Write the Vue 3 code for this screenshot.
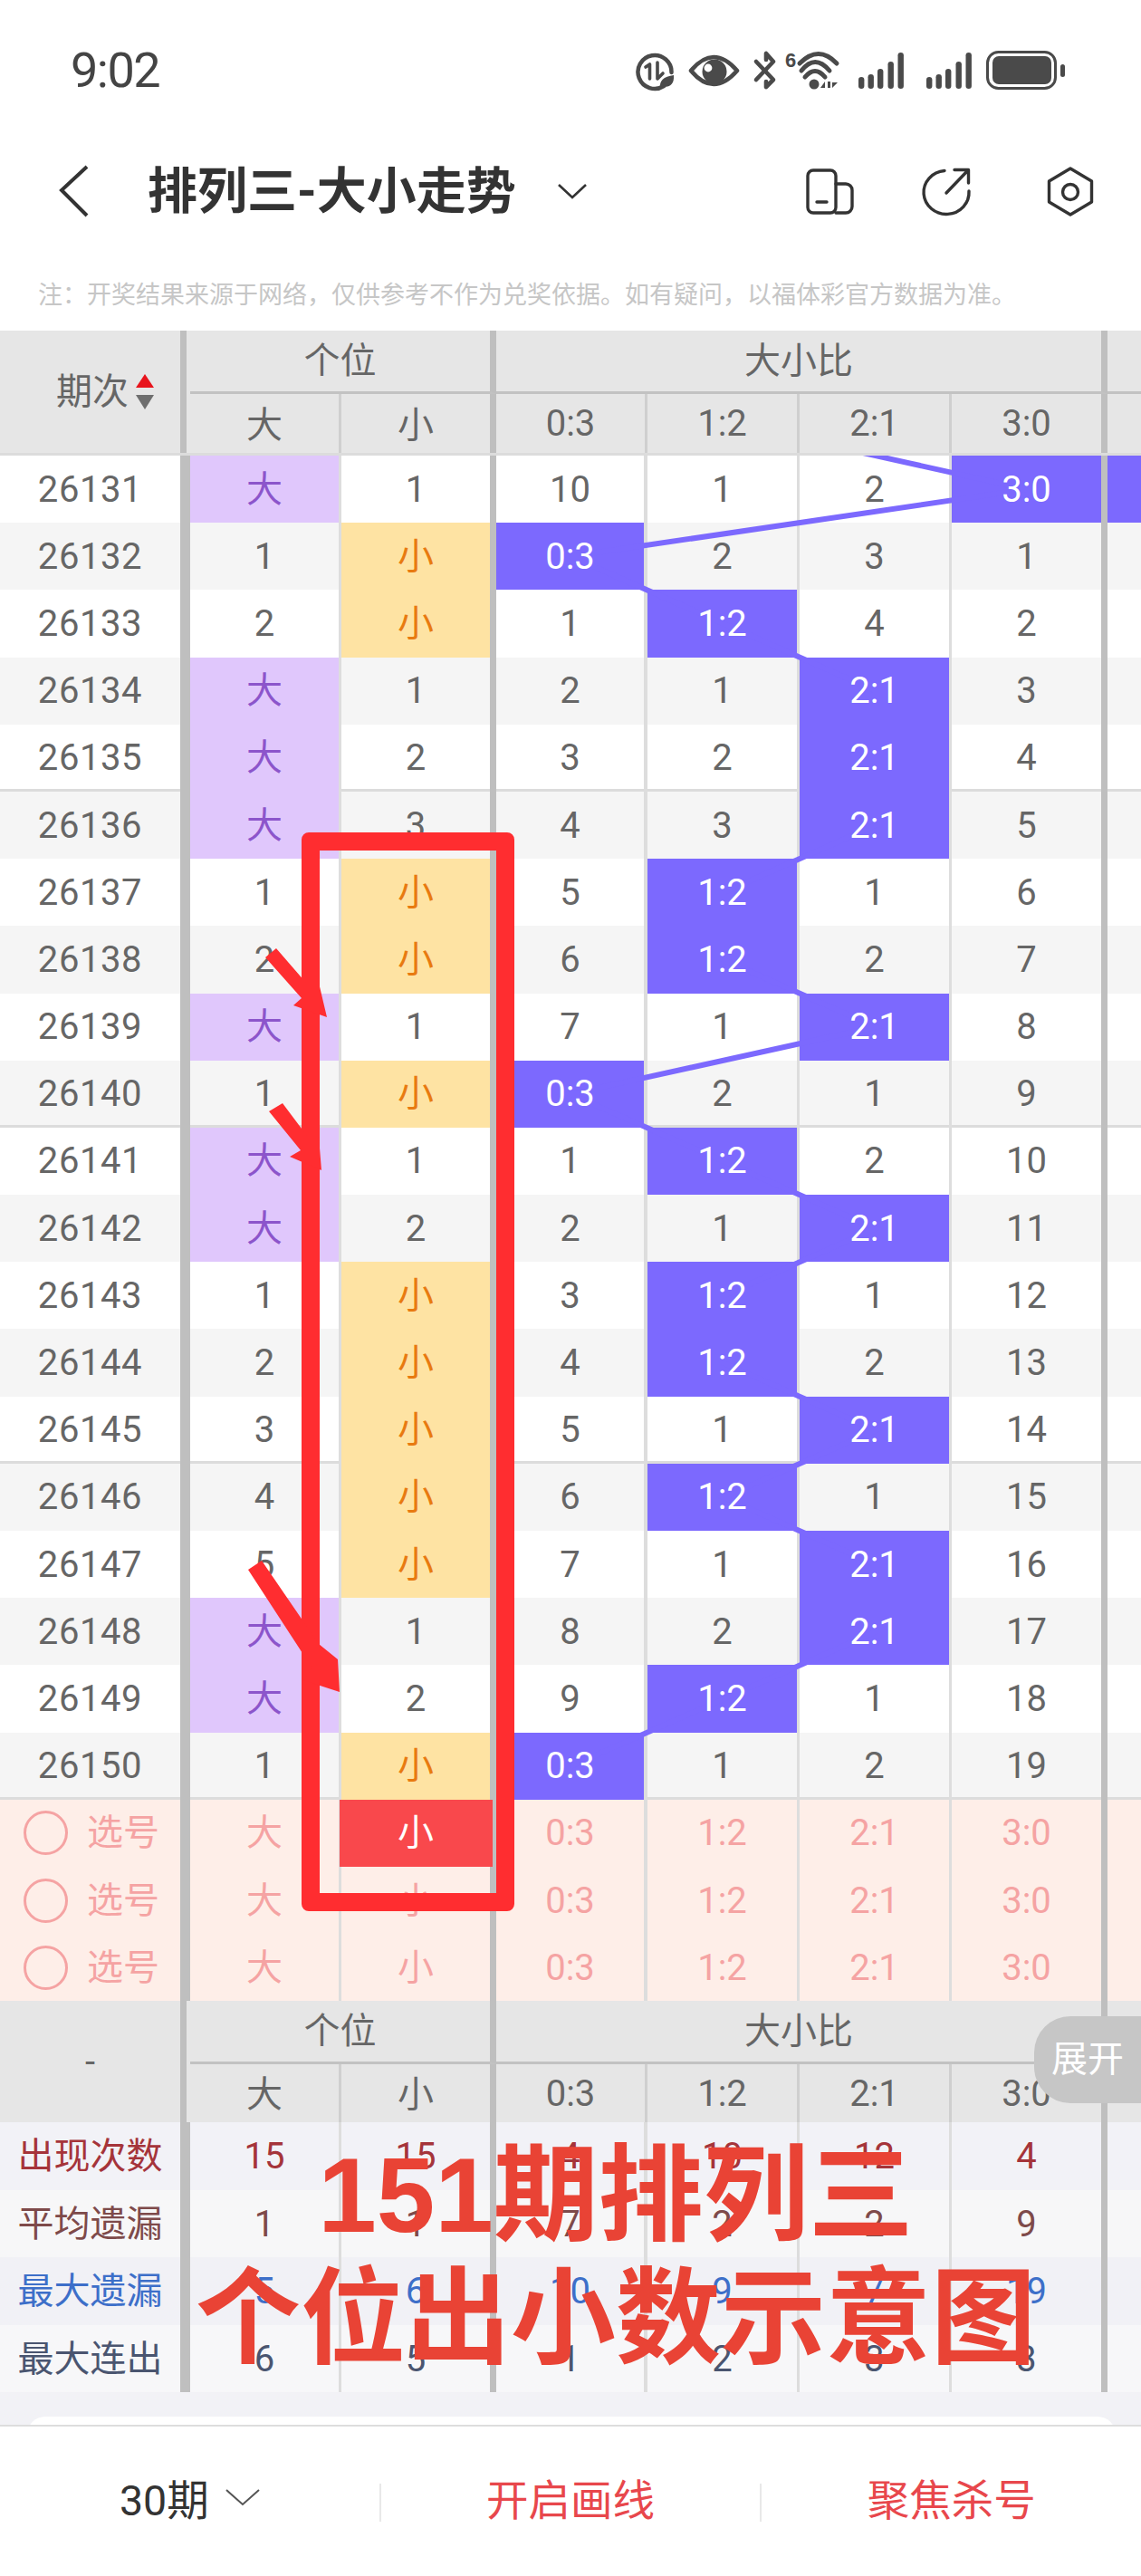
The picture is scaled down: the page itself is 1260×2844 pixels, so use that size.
<template>
  <div class="page">
    <div class="status">
      <span class="time">9:02</span>
      <svg class="status-icons" viewBox="700 54 480 48" width="480" height="48">
        <g fill="none" stroke="#4a4a4a" stroke-linecap="round" stroke-linejoin="round">
          <path d="M733 95 A18.5 18.5 0 1 1 741.5 80" stroke-width="4.5" />
          <path d="M713 74 L717.5 71 V87" stroke-width="3.6" />
          <path d="M726 69 V87 L732 81" stroke-width="3.6" />
          <path d="M763 78 Q788 48 814 78 Q788 108 763 78 Z" stroke-width="4.6" />
          <path d="M835 68 L854 88 L846 96 V90" stroke-width="4.6" />
          <path d="M854 68 L846 59 V66 M854 68 L835 88" stroke-width="4.6" />
          <path d="M883 70 Q904 49 924 70" stroke-width="5" />
          <path d="M885 78 Q900 59 916 78" stroke-width="5" />
          <path d="M889 85 Q900 72 911 85" stroke-width="5" />
          <rect x="1090.5" y="57.5" width="75" height="40" rx="12" stroke-width="3" />
        </g>
        <g fill="#4a4a4a">
          <path d="M729 98 Q727 85 744 83 Q745 96 733 96 Z" />
          <circle cx="789" cy="79" r="13.5" />
          <text x="867" y="74" class="six">6</text>
          <circle cx="899" cy="93" r="5.5" />
          <path d="M906 97 L911 90 V97 Z M914 90 H917 V97 H914 Z M919 91 L925 91 L919 97 Z" />
          <rect v-for="bar in signalBars" :key="bar.x" :x="bar.x" :y="bar.y" width="6.4" :height="98 - bar.y" rx="3.2" />
          <rect x="1096" y="62" width="65" height="31" rx="7" />
          <rect x="1171" y="71" width="5" height="14" rx="2.5" />
        </g>
        <circle cx="782" cy="75" r="4.4" fill="#fff" />
      </svg>
    </div>

    <div class="nav">
      <svg class="back" viewBox="0 0 40 60" width="40" height="60">
        <path d="M34 3 L6 29 L34 57" fill="none" stroke="#333" stroke-width="4" />
      </svg>
      <h1 class="title">排列三-大小走势</h1>
      <svg class="title-arrow" viewBox="0 0 32 18" width="32" height="18">
        <path d="M1 2 L16 16 L31 2" fill="none" stroke="#333" stroke-width="2.6" />
      </svg>
      <svg class="tools" viewBox="885 180 330 65" width="330" height="65">
        <g fill="none" stroke="#333" stroke-width="3.4" stroke-linecap="round" stroke-linejoin="round">
          <rect x="892" y="189" width="31" height="47" rx="6" />
          <path d="M923 204 H934 A7 7 0 0 1 941 211 V229 A7 7 0 0 1 934 236 H923" />
          <path d="M902 224 H913" />
          <path d="M1043 189.5 A25 24 0 1 0 1070 212" />
          <path d="M1045 214 L1069 189 M1054 188.5 H1069.5 V203" />
          <path d="M1182 187 L1205.5 201 V224 L1182 238 L1158.5 224 V201 Z" />
          <circle cx="1182" cy="213" r="8.5" />
        </g>
      </svg>
    </div>

    <p class="note">注：开奖结果来源于网络，仅供参考不作为兑奖依据。如有疑问，以福体彩官方数据为准。</p>

    <div class="head head-main">
      <div class="corner">
        <span class="cjk">期次</span>
        <span class="sort"><i class="up"></i><i class="down"></i></span>
      </div>
      <div class="group g1">个位</div>
      <div class="group g2">大小比</div>
      <div class="group g3"></div>
      <div v-for="label in subHeads" :key="label" class="sub">{{ label }}</div>
      <div class="sub-end"></div>
    </div>

    <div class="body">
      <div v-for="(row, i) in rows" :key="row.id" class="row" :class="{ stripe: i % 2 === 1, split: i > 0 && i % 5 === 0 }">
        <div class="cell c1"><span class="t num">{{ row.id }}</span></div>
        <div class="cell c2" :class="{ big: row.big === '大' }"><span class="t">{{ row.big }}</span></div>
        <div class="cell c3" :class="{ small: row.small === '小' }"><span class="t">{{ row.small }}</span></div>
        <div
          v-for="(val, j) in row.ratios"
          :key="j"
          class="cell"
          :class="['c' + (j + 4), { hit: typeof val === 'string' }]"
        >
          <span class="t">{{ val }}</span>
        </div>
        <div class="cell c8" :class="{ hit: i === 0 }"></div>
      </div>

      <div v-for="n in 3" :key="n" class="row pick" :class="{ split: n === 1 }">
        <div class="cell c1 pick-first">
          <i class="circle"></i>
          <span class="t cjk">选号</span>
        </div>
        <div class="cell c2"><span class="t cjk">大</span></div>
        <div class="cell c3" :class="{ picked: n === 1 }"><span class="t cjk">小</span></div>
        <div v-for="(label, j) in ratioLabels" :key="label" class="cell" :class="'c' + (j + 4)"><span class="t">{{ label }}</span></div>
        <div class="cell c8"></div>
      </div>

      <svg class="trend" viewBox="0 0 1260 1484" width="1260" height="1484">
        <polyline :points="trendPoints" fill="none" stroke="#7c69fe" stroke-width="6" />
      </svg>
    </div>

    <div class="head head-stats">
      <div class="corner corner-stats">-</div>
      <div class="group g1">个位</div>
      <div class="group g2">大小比</div>
      <div class="group g3"></div>
      <div v-for="label in subHeads" :key="label" class="sub">{{ label }}</div>
      <div class="sub-end"></div>
    </div>

    <div v-for="stat in stats" :key="stat.label" class="row stat" :class="stat.cls">
      <div class="cell c1"><span class="t cjk">{{ stat.label }}</span></div>
      <div v-for="(val, j) in stat.values" :key="j" class="cell" :class="'c' + (j + 2)"><span class="t">{{ val }}</span></div>
      <div class="cell c8"></div>
    </div>

    <div class="gap">
      <div class="gap-card"></div>
    </div>

    <div class="footer">
      <div class="foot-item period">
        30期
        <svg viewBox="0 0 38 20" width="38" height="20">
          <path d="M1 2 L19 18 L37 2" fill="none" stroke="#555" stroke-width="2" />
        </svg>
      </div>
      <div class="foot-item action">开启画线</div>
      <div class="foot-item action">聚焦杀号</div>
    </div>

    <div class="expand">展开</div>

    <div class="mark-box"></div>
    <svg class="marks" viewBox="0 0 1260 2844" width="1260" height="2844">
      <polygon points="293,1057 305,1047 344,1092 352,1085 361,1123 324,1110 333,1102" />
      <polygon points="297,1227 312,1218 345,1262 352,1255 355,1292 320,1277 332,1270" />
      <polygon points="274,1733 289,1723 352,1815 373,1832 375,1868 335,1855 345,1842" />
    </svg>

    <div class="caption">151期排列三<br />个位出小数示意图</div>
  </div>
</template>

<script setup>
import { computed } from 'vue'

const ratioLabels = ['0:3', '1:2', '2:1', '3:0']
const subHeads = ['大', '小', ...ratioLabels]

const rows = [
  { id: 26131, big: '大', small: 1, ratios: [10, 1, 2, '3:0'] },
  { id: 26132, big: 1, small: '小', ratios: ['0:3', 2, 3, 1] },
  { id: 26133, big: 2, small: '小', ratios: [1, '1:2', 4, 2] },
  { id: 26134, big: '大', small: 1, ratios: [2, 1, '2:1', 3] },
  { id: 26135, big: '大', small: 2, ratios: [3, 2, '2:1', 4] },
  { id: 26136, big: '大', small: 3, ratios: [4, 3, '2:1', 5] },
  { id: 26137, big: 1, small: '小', ratios: [5, '1:2', 1, 6] },
  { id: 26138, big: 2, small: '小', ratios: [6, '1:2', 2, 7] },
  { id: 26139, big: '大', small: 1, ratios: [7, 1, '2:1', 8] },
  { id: 26140, big: 1, small: '小', ratios: ['0:3', 2, 1, 9] },
  { id: 26141, big: '大', small: 1, ratios: [1, '1:2', 2, 10] },
  { id: 26142, big: '大', small: 2, ratios: [2, 1, '2:1', 11] },
  { id: 26143, big: 1, small: '小', ratios: [3, '1:2', 1, 12] },
  { id: 26144, big: 2, small: '小', ratios: [4, '1:2', 2, 13] },
  { id: 26145, big: 3, small: '小', ratios: [5, 1, '2:1', 14] },
  { id: 26146, big: 4, small: '小', ratios: [6, '1:2', 1, 15] },
  { id: 26147, big: 5, small: '小', ratios: [7, 1, '2:1', 16] },
  { id: 26148, big: '大', small: 1, ratios: [8, 2, '2:1', 17] },
  { id: 26149, big: '大', small: 2, ratios: [9, '1:2', 1, 18] },
  { id: 26150, big: 1, small: '小', ratios: ['0:3', 1, 2, 19] },
]

const stats = [
  { label: '出现次数', cls: 's1', values: [15, 15, 4, 10, 12, 4] },
  { label: '平均遗漏', cls: 's2', values: [1, 1, 7, 2, 2, 9] },
  { label: '最大遗漏', cls: 's3', values: [5, 6, 10, 9, 7, 19] },
  { label: '最大连出', cls: 's4', values: [6, 5, 1, 2, 3, 3] },
]

const signalBars = [
  [948, 85], [958.5, 82], [969, 76], [980.5, 68], [991.5, 58],
  [1023, 85], [1033.5, 82], [1044, 76], [1055.5, 68], [1066.5, 58],
].map(([x, y]) => ({ x, y }))

const ROW_H = 74.2
const columnCenters = [630, 799, 967, 1134]

const trendPoints = computed(() => {
  const points = [`${columnCenters[1]},${-ROW_H / 2}`]
  rows.forEach((row, i) => {
    const col = row.ratios.findIndex((v) => typeof v === 'string')
    points.push(`${columnCenters[col]},${(i + 0.5) * ROW_H}`)
  })
  return points.join(' ')
})
</script>

<style>
body {
  background: #fff;
}
</style>

<style scoped>
.page {
  position: relative;
  width: 1260px;
  height: 2844px;
  overflow: hidden;
  background: #fff;
  font-family: Roboto, "Noto Sans CJK SC", sans-serif;
  color: #666;
}

.status {
  display: flex;
  align-items: center;
  justify-content: space-between;
  box-sizing: border-box;
  height: 130px;
  padding: 26px 80px 0 78px;
}

.time {
  font-size: 54px;
  letter-spacing: -1.5px;
  line-height: 60px;
  color: #444;
}

.six {
  font-family: "Liberation Sans", sans-serif;
  font-size: 22px;
  font-weight: 700;
}

.nav {
  display: flex;
  align-items: center;
  height: 162px;
  padding-left: 62px;
}

.title {
  margin: 0 0 0 61px;
  font-size: 55px;
  font-weight: 700;
  color: #333;
  line-height: 70px;
}

.title-arrow {
  margin-left: 46px;
}

.tools {
  margin-left: auto;
  margin-right: 45px;
}

.note {
  margin: 0;
  height: 73px;
  padding-left: 42px;
  font-size: 27px;
  line-height: 68px;
  color: #c6c6c6;
  white-space: nowrap;
}

.head {
  display: grid;
  grid-template-columns: 210px 167px 171px 167px 168px 168px 172px 37px;
  background: #e6e6e6;
  font-size: 40px;
  color: #666;
}

.head-main {
  grid-template-rows: 70px 65px;
  border-bottom: 3px solid #dcdcdc;
}

.head-stats {
  grid-template-rows: 70px 64px;
}

.corner {
  grid-row: 1 / 3;
  display: flex;
  align-items: center;
  gap: 8px;
  padding-left: 62px;
  box-shadow: inset -4px 0 0 #e6e6e6, inset -11px 0 0 #bfbfbf;
}

.corner-stats {
  justify-content: center;
  padding: 0 11px 0 0;
}

.sort {
  display: flex;
  flex-direction: column;
  gap: 8px;
}

.sort i {
  display: block;
  width: 0;
  height: 0;
  border-left: 10px solid transparent;
  border-right: 10px solid transparent;
}

.sort .up {
  border-bottom: 15px solid #e8141c;
}

.sort .down {
  border-top: 16px solid #6e6e6e;
}

.group {
  display: flex;
  align-items: center;
  justify-content: center;
  box-sizing: border-box;
  padding-bottom: 7px;
  border-bottom: 3px solid #c2c2c2;
}

.g1 {
  grid-column: span 2;
  border-right: 7px solid #bfbfbf;
}

.g2 {
  grid-column: span 4;
  border-right: 7px solid #bfbfbf;
}

.sub {
  display: flex;
  align-items: center;
  justify-content: center;
  border-right: 3px solid #cfcfcf;
  font-size: 40px;
}

.sub:nth-of-type(5),
.sub:nth-of-type(6) {
  padding-bottom: 4px;
}

.sub:nth-of-type(6),
.sub:nth-of-type(10) {
  border-right: 7px solid #bfbfbf;
}

.body {
  position: relative;
}

.trend {
  position: absolute;
  top: 0;
  left: 0;
  z-index: 1;
  pointer-events: none;
}

.row {
  display: grid;
  grid-template-columns: 210px 167px 171px 167px 168px 168px 172px 37px;
  height: 74.2px;
  background: #fff;
}

.stripe {
  background: #f5f5f5;
}

.split {
  box-shadow: 0 -3px 0 #dcdcdc;
}

.cell {
  position: relative;
  display: flex;
  align-items: center;
  justify-content: center;
  font-size: 40px;
  color: #666;
}

.t {
  position: relative;
  z-index: 2;
}

.cjk,
.big .t,
.small .t {
  padding-bottom: 7px;
}

.num {
  letter-spacing: 0.6px;
}

.c1 {
  border-right: 11px solid #bfbfbf;
}

.c2,
.c5,
.c6 {
  border-right: 3px solid #ddd;
}

.c4 {
  border-right: 4px solid #ddd;
}

.c3,
.c7 {
  border-right: 7px solid #bfbfbf;
}

.big {
  background: #e0c7fc;
  color: #8c55cb;
}

.small {
  background: #fee3a3;
  color: #e87a10;
}

.hit {
  background: #7c69fe;
  color: #fff;
}

.pick {
  background: #feeee8;
}

.pick .cell {
  color: #f5a3a3;
}

.pick-first {
  justify-content: flex-start;
  gap: 21px;
  padding-left: 26px;
}

.circle {
  display: block;
  width: 49px;
  height: 49px;
  box-sizing: border-box;
  border: 3px solid #f5a3a3;
  border-radius: 50%;
}

.pick .picked {
  color: #fff;
}

.picked::before {
  content: "";
  position: absolute;
  top: 0;
  bottom: 0;
  left: -2px;
  right: -3px;
  background: #f9484c;
}

.stat {
  height: 74.5px;
}

.s1 {
  background: #f2f2f7;
}

.s1 .cell {
  color: #a5343a;
}

.s2 {
  background: #f7f7f8;
}

.s2 .cell {
  color: #7e4a4a;
}

.s3 {
  background: #f1f1f6;
}

.s3 .cell {
  color: #3d6fc9;
}

.s4 {
  background: #f7f7f9;
}

.s4 .cell {
  color: #4a5570;
}

.gap {
  height: 36px;
  padding: 27px 28px 0 30px;
  box-sizing: border-box;
  background: #f2f2f6;
}

.gap-card {
  height: 20px;
  border-radius: 20px 20px 0 0;
  background: #fff;
}

.footer {
  display: flex;
  height: 165px;
  box-sizing: border-box;
  border-top: 2px solid #ddd;
  background: #fff;
  align-items: center;
}

.foot-item {
  display: flex;
  align-items: center;
  justify-content: center;
  flex: 1;
  box-sizing: border-box;
  height: 42px;
  margin-top: 4px;
  padding-bottom: 12px;
  font-size: 46.5px;
  border-left: 2px solid #e8e8e8;
}

.foot-item:first-child {
  border-left: 0;
}

.period {
  gap: 18px;
  color: #333;
}

.action {
  color: #e8474c;
}

.expand {
  position: absolute;
  top: 2226px;
  right: 0;
  display: flex;
  align-items: center;
  justify-content: flex-start;
  width: 118px;
  height: 96px;
  padding: 0 0 8px 19px;
  box-sizing: border-box;
  border-radius: 40px 0 0 40px;
  background: #c6c6c6;
  color: #fff;
  font-size: 40px;
  z-index: 3;
}

.mark-box {
  position: absolute;
  top: 919px;
  left: 333px;
  width: 235px;
  height: 1191px;
  box-sizing: border-box;
  border: 20px solid #ff2d30;
  border-radius: 8px;
  z-index: 4;
}

.marks {
  position: absolute;
  top: 0;
  left: 0;
  z-index: 4;
  fill: #ff2d30;
  pointer-events: none;
}

.caption {
  position: absolute;
  top: 2356px;
  left: 180px;
  width: 1000px;
  z-index: 5;
  text-align: center;
  font-family: "Liberation Sans", "Noto Sans CJK SC", sans-serif;
  font-size: 116px;
  font-weight: 700;
  line-height: 136px;
  color: #e94335;
  white-space: nowrap;
}
</style>
